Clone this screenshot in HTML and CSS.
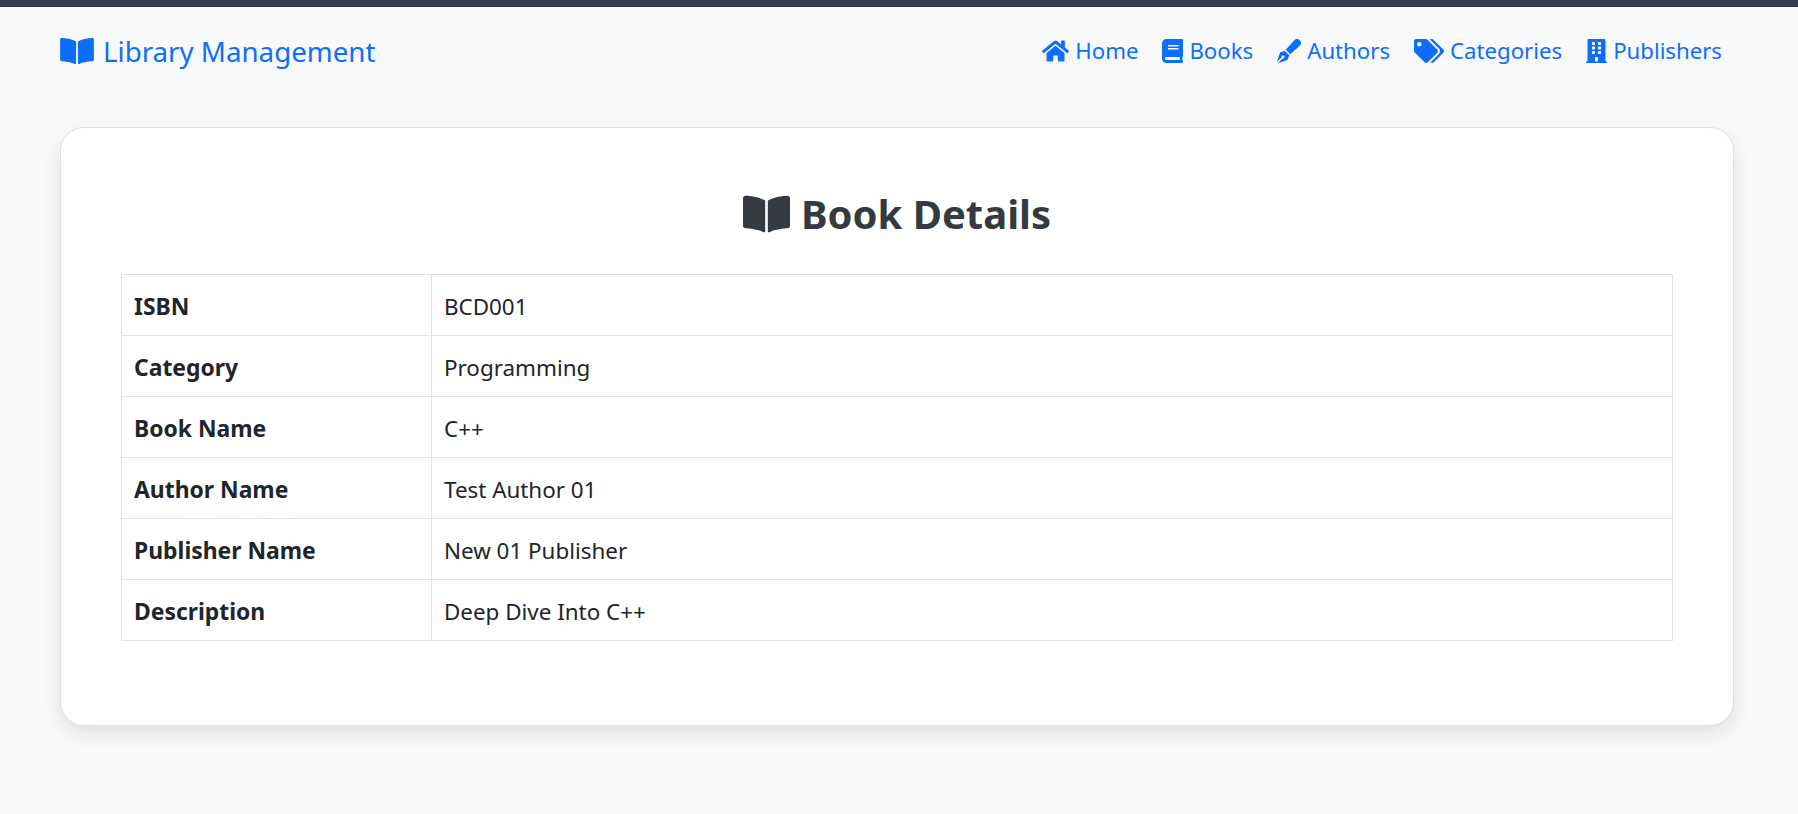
FILE: index.html
```html
<!DOCTYPE html>
<html lang="en">
<head>
<meta charset="utf-8">
<title>Book Details</title>
<link rel="stylesheet" href="styles.css">
</head>
<body>
<svg class="sprite" width="0" height="0" aria-hidden="true">
  <symbol id="i-book-open" viewBox="0 0 576 512"><path d="M542.22 32.05c-54.8 3.11-163.72 14.43-230.96 55.59-4.64 2.84-7.27 7.89-7.27 13.17v363.87c0 11.55 12.63 18.85 23.28 13.49 69.18-34.82 169.23-44.32 218.7-46.92 16.89-.89 30.02-14.43 30.02-30.66V62.75c.01-17.71-15.35-31.74-33.77-30.7zM264.73 87.64C197.5 46.48 88.58 35.17 33.78 32.05 15.36 31.01 0 45.04 0 62.75V400.6c0 16.24 13.13 29.78 30.02 30.66 49.49 2.6 149.59 12.11 218.77 46.95 10.62 5.35 23.21-1.94 23.21-13.46V100.63c0-5.29-2.62-10.14-7.27-12.99z"/></symbol>
  <symbol id="i-home" viewBox="0 0 576 512"><path d="M280.37 148.26L96 300.11V464a16 16 0 0 0 16 16l112.06-.29a16 16 0 0 0 15.92-16V368a16 16 0 0 1 16-16h64a16 16 0 0 1 16 16v95.64a16 16 0 0 0 16 16.05L464 480a16 16 0 0 0 16-16V300L295.67 148.26a12.19 12.19 0 0 0-15.3 0zM571.6 251.47L488 182.56V44.05a12 12 0 0 0-12-12h-56a12 12 0 0 0-12 12v72.61L318.47 43a48 48 0 0 0-61 0L4.34 251.47a12 12 0 0 0-1.6 16.9l25.5 31A12 12 0 0 0 45.15 301l235.22-193.74a12.19 12.19 0 0 1 15.3 0L530.9 301a12 12 0 0 0 16.9-1.6l25.5-31a12 12 0 0 0-1.7-16.93z"/></symbol>
  <symbol id="i-book" viewBox="0 0 448 512"><path d="M448 360V24c0-13.3-10.7-24-24-24H96C43 0 0 43 0 96v320c0 53 43 96 96 96h328c13.3 0 24-10.7 24-24v-16c0-7.5-3.5-14.3-8.9-18.7-4.2-15.4-4.2-59.3 0-74.7 5.4-4.3 8.9-11.1 8.9-18.6zM128 134c0-3.3 2.7-6 6-6h212c3.3 0 6 2.7 6 6v20c0 3.3-2.7 6-6 6H134c-3.3 0-6-2.7-6-6v-20zm0 64c0-3.3 2.7-6 6-6h212c3.3 0 6 2.7 6 6v20c0 3.3-2.7 6-6 6H134c-3.3 0-6-2.7-6-6v-20zm253.4 250H96c-17.7 0-32-14.3-32-32 0-17.6 14.4-32 32-32h285.4c-1.9 17.1-1.9 46.9 0 64z"/></symbol>
  <symbol id="i-pen" viewBox="0 0 512 512"><path d="M79.18 282.94a32.005 32.005 0 0 0-20.24 20.24L0 480l4.69 4.69 92.89-92.89c-.66-2.56-1.57-5.03-1.57-7.8 0-17.67 14.33-32 32-32s32 14.33 32 32-14.33 32-32 32c-2.77 0-5.24-.91-7.8-1.57l-92.89 92.89L32 512l176.82-58.94a31.983 31.983 0 0 0 20.24-20.24l33.07-84.07-98.88-98.88-84.07 33.07zM369.25 28.32L186.14 227.81l97.85 97.85 199.49-183.11C568.4 67.48 443.73-55.94 369.25 28.32z"/></symbol>
  <symbol id="i-tags" viewBox="0 0 640 512"><path d="M497.941 225.941L286.059 14.059A48 48 0 0 0 252.118 0H48C21.49 0 0 21.49 0 48v204.118a48 48 0 0 0 14.059 33.941l211.882 211.882c18.744 18.745 49.136 18.746 67.882 0l204.118-204.118c18.745-18.745 18.745-49.137 0-67.882zM112 160c-26.51 0-48-21.49-48-48s21.49-48 48-48 48 21.49 48 48-21.49 48-48 48zm513.941 133.823L421.823 497.941c-18.745 18.745-49.137 18.745-67.882 0l-.36-.36L527.64 323.522c16.999-16.999 26.36-39.6 26.36-63.64s-9.362-46.641-26.36-63.64L331.397 0h48.721a48 48 0 0 1 33.941 14.059l211.882 211.882c18.745 18.745 18.745 49.137 0 67.882z"/></symbol>
  <symbol id="i-building" viewBox="0 0 448 512"><path d="M436 480h-20V24c0-13.255-10.745-24-24-24H56C42.745 0 32 10.745 32 24v456H12c-6.627 0-12 5.373-12 12v20h448v-20c0-6.627-5.373-12-12-12zM128 76c0-6.627 5.373-12 12-12h40c6.627 0 12 5.373 12 12v40c0 6.627-5.373 12-12 12h-40c-6.627 0-12-5.373-12-12V76zm0 96c0-6.627 5.373-12 12-12h40c6.627 0 12 5.373 12 12v40c0 6.627-5.373 12-12 12h-40c-6.627 0-12-5.373-12-12v-40zm52 148h-40c-6.627 0-12-5.373-12-12v-40c0-6.627 5.373-12 12-12h40c6.627 0 12 5.373 12 12v40c0 6.627-5.373 12-12 12zm76 160h-64v-84c0-6.627 5.373-12 12-12h40c6.627 0 12 5.373 12 12v84zm64-172c0 6.627-5.373 12-12 12h-40c-6.627 0-12-5.373-12-12v-40c0-6.627 5.373-12 12-12h40c6.627 0 12 5.373 12 12v40zm0-96c0 6.627-5.373 12-12 12h-40c-6.627 0-12-5.373-12-12v-40c0-6.627 5.373-12 12-12h40c6.627 0 12 5.373 12 12v40zm0-96c0 6.627-5.373 12-12 12h-40c-6.627 0-12-5.373-12-12V76c0-6.627 5.373-12 12-12h40c6.627 0 12 5.373 12 12v40z"/></symbol>
</svg>
<div class="topbar"></div>
<div class="container">
  <nav class="navbar">
    <a class="brand" href="#"><svg class="icon brand-icon"><use href="#i-book-open"/></svg>Library Management</a>
    <ul class="nav-links">
      <li><a href="#"><svg class="icon icon-home"><use href="#i-home"/></svg>Home</a></li>
      <li><a href="#"><svg class="icon icon-book"><use href="#i-book"/></svg>Books</a></li>
      <li><a href="#"><svg class="icon icon-pen"><use href="#i-pen"/></svg>Authors</a></li>
      <li><a href="#"><svg class="icon icon-tags"><use href="#i-tags"/></svg>Categories</a></li>
      <li><a href="#"><svg class="icon icon-building"><use href="#i-building"/></svg>Publishers</a></li>
    </ul>
  </nav>
  <main class="card">
    <h3 class="title"><svg class="icon title-icon"><use href="#i-book-open"/></svg>Book Details</h3>
    <table class="details">
      <tbody>
        <tr><th>ISBN</th><td>BCD001</td></tr>
        <tr><th>Category</th><td>Programming</td></tr>
        <tr><th>Book Name</th><td>C++</td></tr>
        <tr><th>Author Name</th><td>Test Author 01</td></tr>
        <tr><th>Publisher Name</th><td>New 01 Publisher</td></tr>
        <tr><th>Description</th><td>Deep Dive Into C++</td></tr>
      </tbody>
    </table>
  </main>
</div>
</body>
</html>
```
FILE: styles.css
```css
* { box-sizing: border-box; }
html, body { margin: 0; height: 100%; }
body {
  background: #f8f9fa;
  color: #212529;
  font-family: "Noto Sans", "Open Sans", sans-serif;
  font-size: 22.4px;
  line-height: 36px;
  overflow: hidden;
}
.sprite { display: block; width: 0; height: 0; }
.topbar { height: 7px; background: #343c4e; border-bottom: 1px solid #2d3340; }
.container { padding: 0 64px 0 60px; }
.icon { fill: currentColor; flex: none; display: block; }
a { color: #0d6efd; text-decoration: none; }
.navbar {
  display: flex;
  justify-content: space-between;
  align-items: center;
  height: 77px;
  padding-top: 11px;
  margin-bottom: 43px;
}
.brand { display: flex; align-items: center; gap: 9px; font-size: 27.7px; }
.brand-icon { width: 34px; height: 30px; }
.nav-links { display: flex; list-style: none; margin: 0; padding: 0 12px 0 0; gap: 24px; font-size: 22.2px; }
.nav-links a { display: flex; align-items: center; gap: 6px; }
.icon-home { width: 27px; height: 24px; }
.icon-book { width: 21px; height: 24px; }
.icon-pen { width: 24px; height: 24px; }
.icon-tags { width: 30px; height: 24px; }
.icon-building { width: 21px; height: 24px; }
.card {
  background: #fff;
  border: 1px solid #dfe0e1;
  border-radius: 24px;
  box-shadow: 0 8px 20px rgba(0, 0, 0, .1);
  padding: 60px;
  height: 599px;
}
.title {
  display: flex;
  justify-content: center;
  align-items: center;
  gap: 11px;
  margin: 0 0 36px;
  color: #343a40;
  font-size: 40px;
  font-weight: 700;
  line-height: 50px;
  padding-top: 2px;
  height: 50px;
}
.title-icon { width: 47px; height: 42px; }
.details { width: 100%; border-collapse: collapse; table-layout: fixed; }
.details th, .details td {
  border: 1px solid #dee2e6;
  padding: 14px 12px 10px;
  height: 61px;
  text-align: left;
  font-weight: 400;
}
.details th { width: 310px; font-size: 22.9px; font-weight: 700; }
```
